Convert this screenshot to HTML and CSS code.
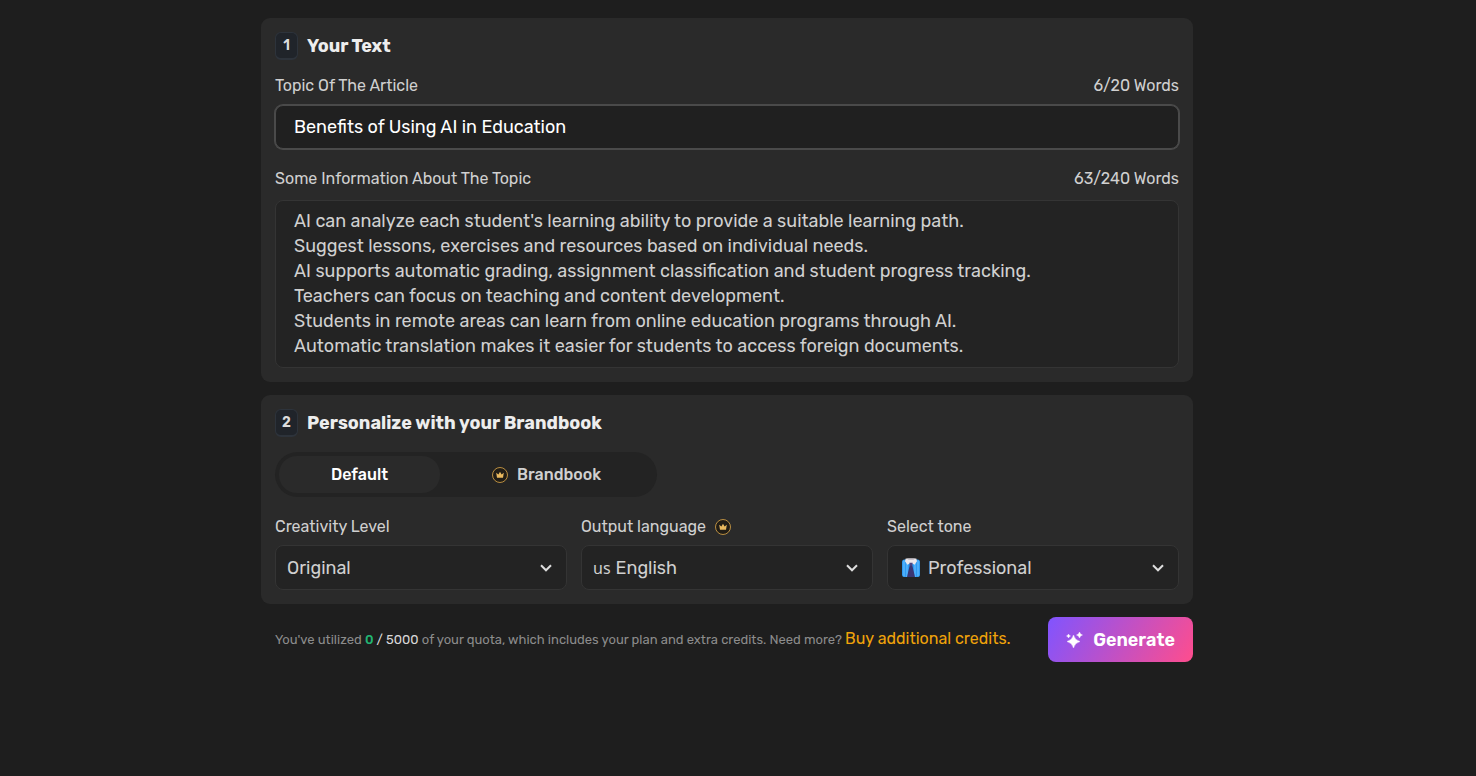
FILE: index.html
```html
<!DOCTYPE html>
<html lang="en">
<head>
<meta charset="utf-8">
<meta name="viewport" content="width=device-width, initial-scale=1">
<title>Article generator</title>
<link rel="stylesheet" href="styles.css">
</head>
<body>
<svg class="defs" aria-hidden="true">
  <symbol id="crown" viewBox="0 0 16 16">
    <circle cx="8" cy="8" r="7.500" fill="#211d16" stroke="#c99a45" stroke-width=".9"/>
    <path d="M4.200 5.800l2.200 1.700L8 4.800l1.600 2.700 2.200-1.700-.8 5H5z" fill="#e9b95f"/>
  </symbol>
  <symbol id="chevron" viewBox="0 0 12 8">
    <path d="M1 1.300l5 5 5-5" fill="none" stroke="#dedede" stroke-width="2"/>
  </symbol>
</svg>
<form class="page">
  <section class="card">
    <header class="card-head"><span class="badge">1</span><h2 class="title">Your Text</h2></header>
    <div class="label-row"><label for="topic">Topic Of The Article</label><span>6/20 Words</span></div>
    <input class="topic" id="topic" type="text" value="Benefits of Using AI in Education">
    <div class="label-row second"><label for="info">Some Information About The Topic</label><span>63/240 Words</span></div>
    <textarea class="info" id="info" rows="6">AI can analyze each student's learning ability to provide a suitable learning path.
Suggest lessons, exercises and resources based on individual needs.
AI supports automatic grading, assignment classification and student progress tracking.
Teachers can focus on teaching and content development.
Students in remote areas can learn from online education programs through AI.
Automatic translation makes it easier for students to access foreign documents.</textarea>
  </section>
  <section class="card">
    <header class="card-head"><span class="badge">2</span><h2 class="title">Personalize with your Brandbook</h2></header>
    <div class="tabs">
      <button class="tab active" type="button">Default</button>
      <button class="tab" type="button"><svg class="crown"><use href="#crown"/></svg>Brandbook</button>
    </div>
    <div class="fields">
      <div class="field">
        <label class="field-label" for="level">Creativity Level</label>
        <div class="select-box"><select class="select" id="level"><option>Original</option></select><svg class="chevron"><use href="#chevron"/></svg></div>
      </div>
      <div class="field">
        <label class="field-label" for="lang">Output language <svg class="crown"><use href="#crown"/></svg></label>
        <div class="select-box"><span class="flag">us</span><select class="select" id="lang"><option>English</option></select><svg class="chevron"><use href="#chevron"/></svg></div>
      </div>
      <div class="field">
        <label class="field-label" for="tone">Select tone</label>
        <div class="select-box">
          <svg class="shirt" viewBox="0 0 18 19">
            <rect x="0" y="1.500" width="18" height="17.500" rx="2.500" fill="#2f9af2"/>
            <path d="M2 2.500v16M5 5v14M13 5v14M16 2.500v16" stroke="#62bcff" stroke-width="1.200"/>
            <path d="M8 6h2l3 13H5z" fill="#3a3673"/>
            <path d="M3.700 .5h10.600l.7 2.800-2.400 3.400L9 5 5.400 6.700 3 3.300z" fill="#ece8ec"/>
            <path d="M5 .5h8L11.500 2h-5z" fill="#c9c3cc"/>
            <path d="M7.300 4.800h3.400L10 7.700H8z" fill="#4a4484"/>
          </svg>
          <select class="select" id="tone"><option>Professional</option></select><svg class="chevron"><use href="#chevron"/></svg>
        </div>
      </div>
    </div>
  </section>
  <footer class="footer">
    <p class="quota">You've utilized <b class="used">0</b> <span class="limit">/ 5000</span> of your quota, which includes your plan and extra credits. Need more? <a class="buy" href="#">Buy additional credits.</a></p>
    <button class="generate" type="submit">
      <svg class="sparkle" viewBox="0 0 17 17" fill="#fff"><path d="M7.500 4Q8.800 9.200 14 10.500 8.800 11.800 7.500 17 6.200 11.800 1 10.500 6.200 9.200 7.500 4zM13.500 1Q14.100 3.400 16.500 4 14.100 4.600 13.500 7 12.900 4.600 10.500 4 12.900 3.400 13.500 1zM2.500 3Q2.900 4.600 4.500 5 2.900 5.400 2.500 7 2.100 5.400.5 5 2.100 4.600 2.500 3z" stroke="#fff" stroke-width=".4"/></svg>
      Generate
    </button>
  </footer>
</form>
</body>
</html>
```
FILE: styles.css
```css
* { box-sizing: border-box; }
body { margin: 0; padding: 18px 22px 18px 0; background: #1e1e1e; color: #d0d0d0; font: 16px/20px Rubik, Roboto, sans-serif; }
button, input, select, textarea { font: inherit; color: inherit; margin: 0; }
.defs { display: none; }
.page { max-width: 932px; margin: 0 auto; display: flex; flex-direction: column; gap: 13px; }
.card { background: #2a2a2a; border-radius: 9px; padding: 14px; }
.card-head { display: flex; align-items: center; gap: 9px; margin-bottom: 15px; }
.badge { width: 23px; height: 28px; border: 1px solid #2d333b; border-bottom-width: 2px; border-radius: 6px; background: #20242a; color: #dcdcdc; font-size: 14px; line-height: 26px; font-weight: 600; text-align: center; }
.title { margin: 0; font-size: 18px; line-height: 24px; font-weight: 700; color: #ededed; }
.label-row { display: flex; justify-content: space-between; line-height: 22px; margin-bottom: 8px; }
.second { margin: 19px 0 10px; }
.topic, .info { display: block; width: 100%; border: 1px solid #343434; border-radius: 8px; background: #232323; font-size: 18px; outline: none; }
.topic { height: 44px; padding: 0 18px; background: #202020; border-color: #4a4a4a; box-shadow: 0 0 0 1px #4a4a4a; color: #fff; }
.info { padding: 8px 18px; line-height: 25px; resize: none; overflow: hidden; }
.tabs { display: grid; grid-template-columns: 161px 1fr; width: 382px; max-width: 100%; height: 45px; padding: 4px; border-radius: 23px; background: #232323; margin-bottom: 20px; }
.tab { display: flex; align-items: center; justify-content: center; gap: 9px; border: 0; border-radius: 18px; padding: 0; background: none; font-weight: 500; }
.active { background: #2a2a2a; color: #fff; }
.crown { width: 16px; height: 16px; flex: none; }
.fields { display: grid; grid-template-columns: repeat(3, 1fr); gap: 14px; }
.field-label { display: flex; align-items: center; gap: 9px; margin-bottom: 8px; }
.select-box { display: flex; align-items: center; height: 45px; padding: 0 14px 0 11px; border: 1px solid #343434; border-radius: 8px; background: #232323; font-size: 18px; }
.select { flex: 1; min-width: 0; appearance: none; border: 0; padding: 0; background: transparent; outline: none; line-height: 24px; }
.chevron { width: 12px; height: 8px; flex: none; }
.flag { font-family: "Noto Sans", sans-serif; font-size: 16px; margin-right: 5px; }
.shirt { width: 18px; height: 19px; flex: none; margin: 0 8px 0 3px; }
.footer { display: flex; align-items: center; justify-content: space-between; padding-left: 14px; }
.quota { margin: 0; font-size: 13px; color: #8c8c8c; }
.used { color: #22b573; font-weight: 500; }
.limit { color: #d8d8d8; }
.buy { color: #f0a30a; font-size: 16px; text-decoration: none; }
.generate { display: flex; align-items: center; gap: 10px; flex: none; height: 45px; padding: 0 18px; border: 0; border-radius: 8px; background: linear-gradient(120deg, #8054ff, #ff4d8d); color: #fff; font-size: 18px; font-weight: 600; }
.sparkle { width: 17px; height: 17px; }
```
